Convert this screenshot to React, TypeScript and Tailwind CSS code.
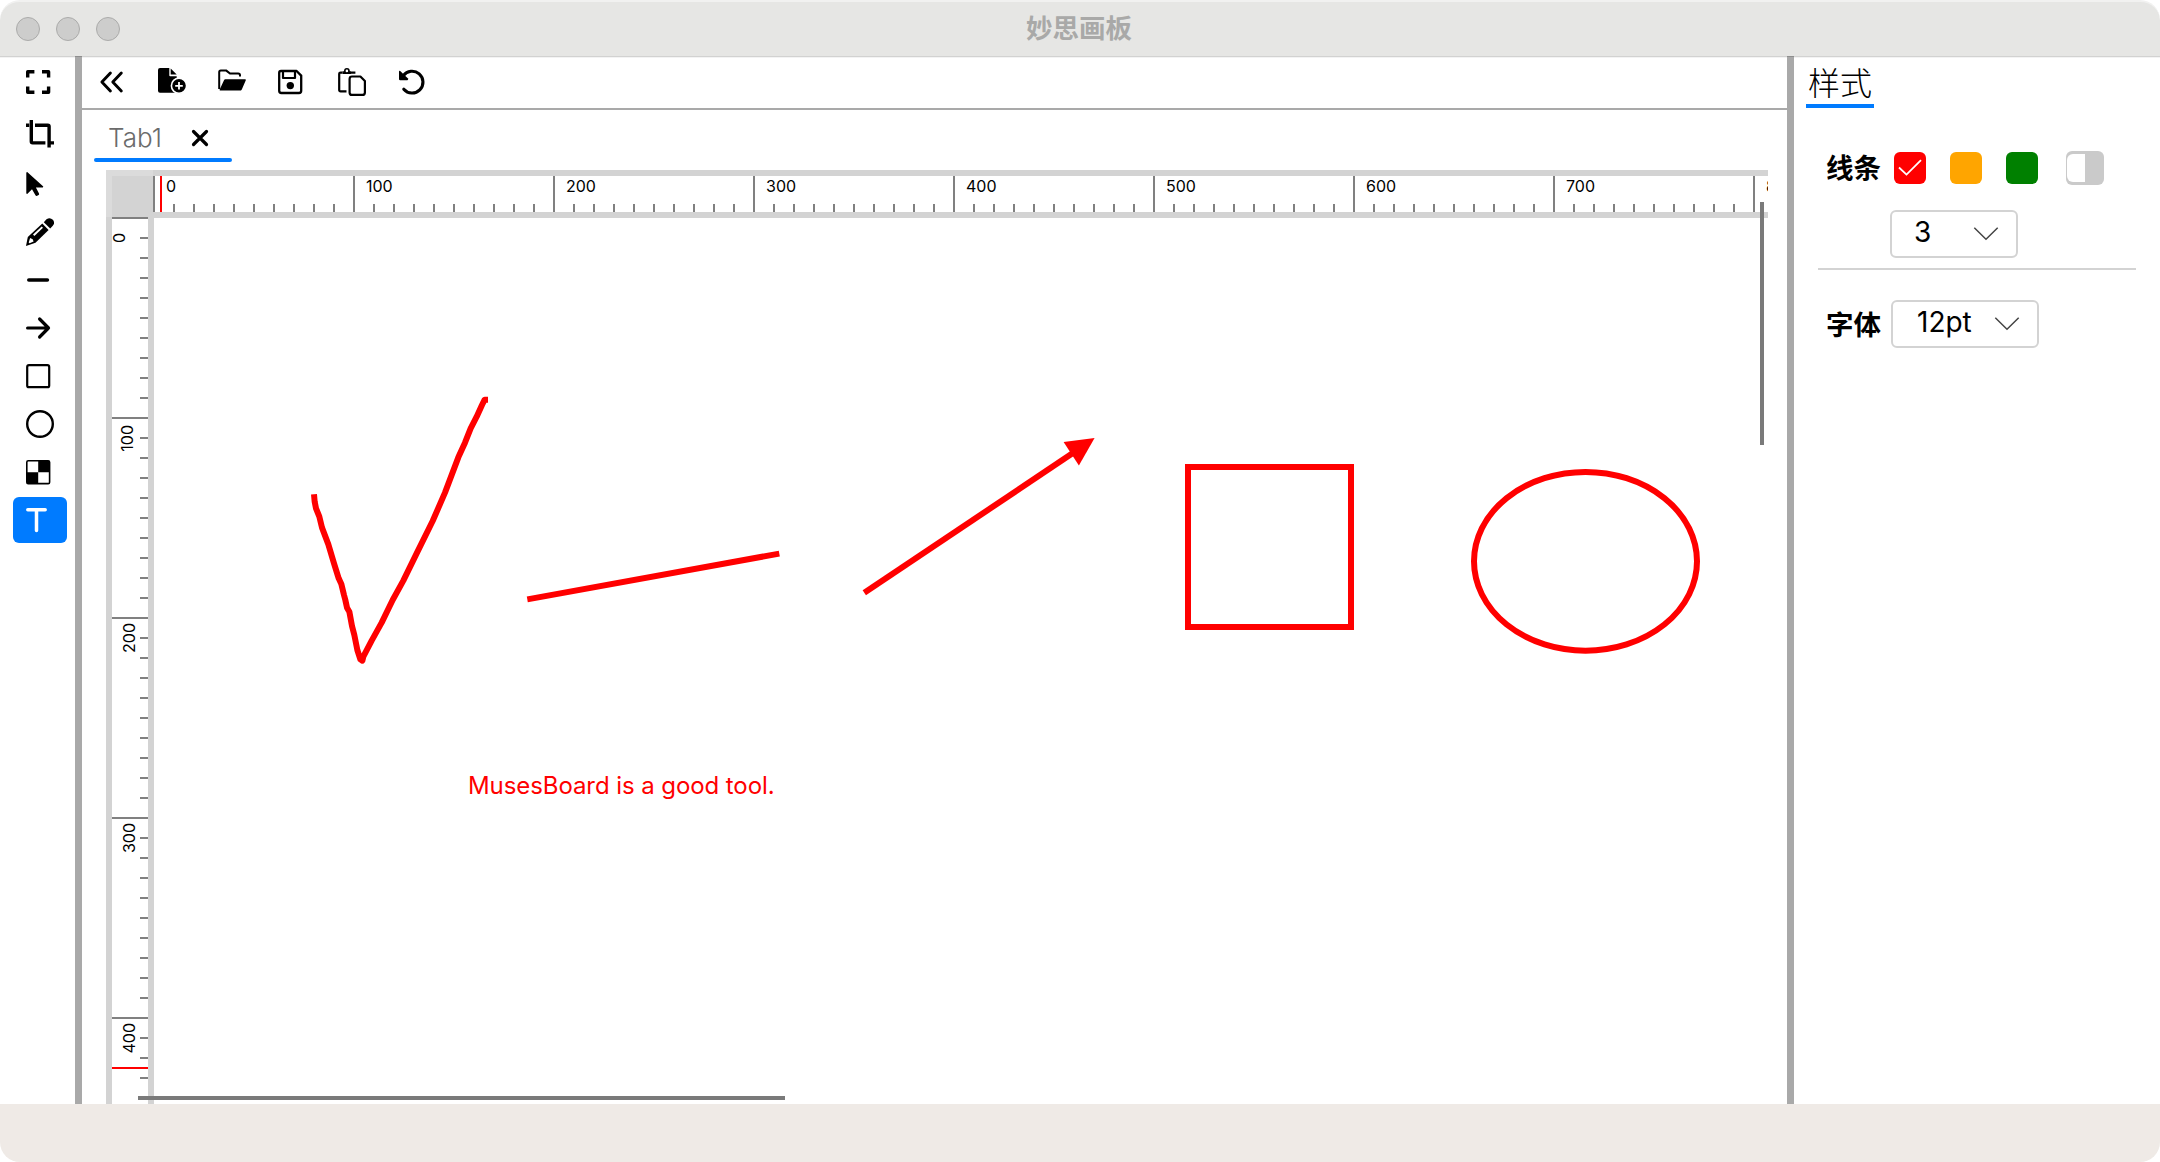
import React from "react";

const minorTicks = [1, 2, 3, 4, 5, 6, 7, 8, 9];

function Icon({ children }: { children: React.ReactNode }) {
  return (
    <svg width="28" height="28" viewBox="0 0 28 28" fill="none" stroke="currentColor" className="block shrink-0">
      {children}
    </svg>
  );
}

const tools: { name: string; icon: React.ReactNode; row: string }[] = [
  {
    name: "fullscreen",
    row: "h-12",
    icon: (
      <g strokeWidth="3.4" strokeLinejoin="round">
        <path d="M1.7 9.6V3.7H8.4M16 3.7H22.6V9.6M22.6 18.4V24.3H16M8.4 24.3H1.7V18.4" />
      </g>
    ),
  },
  {
    name: "crop",
    row: "h-[54px] pt-[2px]",
    icon: (
      <g strokeWidth="3.4" strokeLinejoin="round">
        <path d="M0 5.3H3.2M5.3 0V21.6Q5.3 22.9 6.6 22.9H19.4M9 5.3H21.8Q23.1 5.3 23.1 6.5V27.6M24.4 22.9H28" />
      </g>
    ),
  },
  {
    name: "pointer",
    row: "h-12",
    icon: <path d="M0.3 2.6V23.6L1.2 24L6 19.2L9.6 25.4Q10.2 26.2 11.2 25.7L12.6 25Q13.4 24.5 13 23.5L9.9 17.4H16.8L17.3 16.4L1.2 2Z" fill="currentColor" stroke="none" />,
  },
  {
    name: "pencil",
    row: "h-12",
    icon: (
      <g stroke="none">
        <path d="M16.3 5.6L22.6 11.9L9.5 24.8L0 28L1.8 18.9Z" fill="currentColor" />
        <path d="M17.8 4.2L20.5 1.3Q24 -1.2 26.8 1.8Q29.4 4.8 26.8 7.7L24.2 10.4Z" fill="currentColor" />
        <path d="M7 16.5L15.7 8.6L17 9.8L8.4 18.1Z" fill="white" />
        <path d="M4.1 20.1L6.7 21.2L7.6 23.4L3.6 25.2L2.7 24.4Z" fill="white" />
      </g>
    ),
  },
  { name: "line", row: "h-12", icon: <path d="M2.8 14H21.4" strokeWidth="3.6" strokeLinecap="round" /> },
  {
    name: "arrow",
    row: "h-12",
    icon: <path d="M1.6 14H22.5M13.6 5L22.5 14L13.6 23" strokeWidth="3.2" strokeLinecap="round" strokeLinejoin="round" />,
  },
  { name: "rectangle", row: "h-12", icon: <rect x="1.2" y="3.2" width="22" height="22" rx="1.8" strokeWidth="2.2" /> },
  { name: "circle", row: "h-12", icon: <circle cx="14" cy="14" r="12.8" strokeWidth="2.4" /> },
  {
    name: "mosaic",
    row: "h-12",
    icon: (
      <g>
        <rect x="0.8" y="2.8" width="22.8" height="22.8" rx="1.4" strokeWidth="1.6" />
        <path d="M12.2 3H23.4V14.2H12.2ZM1 14.2H12.2V25.4H1Z" fill="currentColor" stroke="none" />
      </g>
    ),
  },
  {
    name: "text",
    row: "h-12",
    icon: <path d="M1.8 3.8H19.2M10.5 3.8V24.6" strokeWidth="3.5" strokeLinecap="round" />,
  },
];

const actions: { name: string; icon: React.ReactNode }[] = [
  {
    name: "collapse",
    icon: <path d="M12.4 5L3.9 14L12.4 23M23.3 5L14.8 14L23.3 23" strokeWidth="2.9" strokeLinecap="round" strokeLinejoin="round" />,
  },
  {
    name: "new",
    icon: (
      <g stroke="none">
        <path d="M2 0H11.3V7.4Q11.3 8.2 12.1 8.2H18.7V24.8H2Q0 24.8 0 22.8V2Q0 0 2 0Z" fill="currentColor" />
        <path d="M12.7 0.6L18.7 6.6H12.7Z" fill="currentColor" />
        <circle cx="21" cy="17.8" r="7.6" fill="currentColor" stroke="white" strokeWidth="1.6" />
        <path d="M21 14V21.6M17.2 17.8H24.8" stroke="white" strokeWidth="1.8" />
      </g>
    ),
  },
  {
    name: "open",
    icon: (
      <g>
        <path d="M1.2 21V4.2Q1.2 2.6 2.8 2.6H8.3L12 5.6H20.2Q22 5.6 22 7.4V8.6" strokeWidth="2" />
        <path d="M7.4 11.2H27Q28.2 11.2 27.8 12.3L23.8 21.4Q23.2 22.6 21.8 22.6H2.6Q1.2 22.6 1.8 21.2L6 12.2Q6.4 11.2 7.4 11.2Z" fill="currentColor" stroke="none" />
      </g>
    ),
  },
  {
    name: "save",
    icon: (
      <g>
        <path d="M3 3H18.6L23.2 7.6V22.8Q23.2 25 21 25H3.4Q1.2 25 1.2 22.8V4.8Q1.2 3 3 3Z" strokeWidth="2.3" strokeLinejoin="round" />
        <path d="M5 3V10H17V3" strokeWidth="2.2" strokeLinejoin="round" />
        <circle cx="12.3" cy="17.6" r="3.7" fill="currentColor" stroke="none" />
      </g>
    ),
  },
  {
    name: "paste",
    icon: (
      <g>
        <path d="M8.5 23.4H2.6Q1.2 23.4 1.2 22V5.8Q1.2 4.6 2.6 4.6H4.6M13 4.6H17.4" strokeWidth="2.2" />
        <path d="M4.6 3.2H6.6A2.3 2.3 0 0 1 11.2 3.2H13V6H4.6Z" fill="currentColor" stroke="none" />
        <circle cx="8.9" cy="2.9" r="2.1" strokeWidth="1.6" fill="white" />
        <path d="M14 8.5H22.4L26.9 13V24.4Q26.9 26.9 24.4 26.9H14Q11.6 26.9 11.6 24.4V11Q11.6 8.5 14 8.5Z" strokeWidth="2.2" strokeLinejoin="round" />
      </g>
    ),
  },
  {
    name: "undo",
    icon: (
      <g>
        <path d="M5.3 7.6A10.9 10.9 0 1 1 5.8 21.2" strokeWidth="3.1" strokeLinecap="round" />
        <path d="M1 3.6Q1 2 2.2 3.1L10 10.6Q10.6 12 9.4 12.2H2.2Q1 12.2 1 11Z" fill="currentColor" stroke="none" />
      </g>
    ),
  },
];

function TitleBar() {
  return (
    <header className="flex h-[57px] shrink-0 items-center rounded-t-[20px] border-b border-t-2 border-b-[#d2d2d1] border-t-[#f1f1f0] bg-[#e6e6e4]">
      <div className="flex w-[200px] gap-4 pl-4">
        {["close", "minimize", "zoom"].map((n) => (
          <span key={n} className="size-6 rounded-full border border-[#ababaa] bg-[#cdcdcc]" />
        ))}
      </div>
      <h1 className="flex-1 pb-[3px] pr-[202px] text-center text-[26.5px] font-bold leading-[40px] text-[#a9a9a8]">妙思画板</h1>
    </header>
  );
}

function ToolBox() {
  return (
    <nav className="flex w-[75px] shrink-0 flex-col">
      {tools.map((t) => (
        <div key={t.name} className={`flex shrink-0 items-center pl-[13px] ${t.row}`}>
          <button
            aria-label={t.name}
            className={
              t.name === "text"
                ? "flex h-[46px] w-[54px] items-center rounded-md bg-[#007bff] pl-[13px] text-white"
                : "flex h-[46px] w-[54px] items-center pl-[13px] text-black"
            }
          >
            <Icon>{t.icon}</Icon>
          </button>
        </div>
      ))}
    </nav>
  );
}

function Divider() {
  return <div className="relative -mt-[2px] w-[7px] shrink-0 border-t border-[#8e8e8e] bg-[#a9a9a9]" />;
}

function HorizontalRuler() {
  return (
    <div className="relative flex h-12 w-[1615px] overflow-hidden border-b-[6px] border-t-[6px] border-[#d3d3d3]">
      {[0, 100, 200, 300, 400, 500, 600, 700, 800].map((n) => (
        <div key={n} className="relative flex h-9 w-[200px] shrink-0 items-end border-l-2 border-[#808080]">
          {minorTicks.map((i) => (
            <span key={i} className="h-2 w-5 border-r-2 border-[#808080]" />
          ))}
          <span className="absolute left-[11px] top-0 text-[16px] leading-[20px]">{n}</span>
        </div>
      ))}
      <span className="absolute left-[7px] top-0 h-9 w-[2px] bg-[#ff0000]" />
    </div>
  );
}

function VerticalRuler() {
  return (
    <div className="relative h-[887px] w-12 shrink-0 overflow-hidden border-l-[6px] border-r-[6px] border-[#d3d3d3]">
      {[0, 100, 200, 300, 400].map((n) => (
        <div key={n} className="relative flex h-[200px] flex-col items-end border-t-2 border-[#808080]">
          {minorTicks.map((i) => (
            <span key={i} className="h-5 w-2 shrink-0 border-b-2 border-[#808080]" />
          ))}
          <span
            className={
              n === 0
                ? "absolute left-[-3px] top-[14px] rotate-180 text-[16px] leading-[20px] [writing-mode:vertical-rl]"
                : n === 100
                  ? "absolute left-[5px] top-[6px] rotate-180 text-[16px] leading-[20px] [writing-mode:vertical-rl]"
                  : "absolute left-[7px] top-[4px] rotate-180 text-[16px] leading-[20px] [writing-mode:vertical-rl]"
            }
          >
            {n}
          </span>
        </div>
      ))}
      <span className="absolute left-0 top-[850px] h-[2px] w-9 bg-[#ff0000]" />
    </div>
  );
}

function Drawing() {
  return (
    <svg width="1614" height="886" viewBox="154 218 1614 886" className="block shrink-0" fill="none" stroke="#ff0000" strokeWidth="6">
      <polyline
        transform="translate(280 370) scale(0.33333)"
        strokeWidth="18"
        strokeLinejoin="round"
        points="102,373 104,395 108,415 118,440 126,473 145,523 162,580 176,625 184,642 192,675 196,690 201,713 208,725 216,768 223,795 232,840 241,868 247,872 250,860 275,812 305,758 338,690 370,632 410,550 458,453 495,368 535,262 555,218 572,175 590,140 606,105 614,89 624,89"
      />
      <path d="M527.3 599.4L779.3 553.6" />
      <path d="M864.3 592.8L1072.5 453.3" />
      <path d="M1094.6 438.1L1063.6 442L1078.9 465.4Z" fill="#ff0000" stroke="none" />
      <rect x="1188" y="467" width="163" height="160" />
      <ellipse cx="1585.5" cy="561.3" rx="111.5" ry="89.4" />
      <text x="468" y="794" fontSize="24" letterSpacing="-0.08" fill="#ff0000" stroke="none">
        MusesBoard is a good tool.
      </text>
    </svg>
  );
}

function Workspace() {
  return (
    <main className="flex w-[1705px] shrink-0 flex-col">
      <div className="flex h-[52px] shrink-0 items-center border-b-2 border-[#a9a9a9] pl-4">
        {actions.map((a) => (
          <button key={a.name} aria-label={a.name} className="mb-[2px] w-[60px]">
            <Icon>{a.icon}</Icon>
          </button>
        ))}
      </div>
      <div className="flex h-[60px] shrink-0 pl-3">
        <div className="flex h-[52px] w-[138px] items-center justify-between border-b-4 border-[#007bff] rounded-none border-none pl-[14px] pr-[23px]">
          <span className="pt-[3px] text-[26px] font-light leading-[32px] text-[#6b6b6b]">Tab1</span>
          <svg width="18" height="18" viewBox="0 0 18 18" stroke="black" strokeWidth="3.2" strokeLinecap="round" className="mt-[4px]">
            <path d="M2.5 2.5L15.5 15.5M15.5 2.5L2.5 15.5" />
          </svg>
        </div>
      </div>
      <div className="relative h-[934px] shrink-0 pl-6">
        <span className="absolute left-3 top-[-12px] h-1 w-[138px] rounded-sm bg-[#007bff]" />
        <div className="flex h-[47px]">
          <div className="w-[47px] shrink-0 border-l-[6px] border-t-[6px] border-[#dbdbdb] bg-[#d3d3d3]" />
          <HorizontalRuler />
        </div>
        <div className="flex">
          <VerticalRuler />
          <div className="mt-px">
            <Drawing />
          </div>
        </div>
        <span className="absolute left-[56px] top-[926px] h-1 w-[647px] bg-[#7a7a7a]" />
        <span className="absolute left-[1678px] top-8 h-[243px] w-1 bg-[#7a7a7a]" />
      </div>
    </main>
  );
}

function Chevron() {
  return (
    <svg width="26" height="16" viewBox="0 0 26 16" fill="none" stroke="#444" strokeWidth="1.5">
      <path d="M1.3 1.7L13 13.2L24.7 1.7" />
    </svg>
  );
}

function StylePanel() {
  return (
    <aside className="flex w-[366px] shrink-0 flex-col">
      <div className="ml-3 flex h-[50px] w-[68px] justify-center border-b-4 border-[#007bff]">
        <span className="pt-[2px] text-[32px] font-light leading-[48px]">样式</span>
      </div>
      <div className="mt-[42px] flex h-[36px] items-center pl-8">
        <span className="w-[68px] text-[27.5px] font-bold leading-[36px]">线条</span>
        <span className="flex size-8 items-center justify-center rounded-md bg-[#ff0000]">
          <svg width="24" height="18" viewBox="0 0 24 18" fill="none" stroke="white" strokeWidth="1.8">
            <path d="M1 8.5L8.5 15.6L23 1.2" />
          </svg>
        </span>
        <span className="ml-6 size-8 rounded-md bg-[#ffa500]" />
        <span className="ml-6 size-8 rounded-md bg-[#008000]" />
        <span className="ml-7 flex h-[34px] w-[38px] items-center rounded-md bg-[#cacaca] pl-px">
          <span className="h-7 w-[18px] rounded-l-md bg-white" />
        </span>
      </div>
      <div className="ml-24 mt-6 flex h-12 w-32 items-center justify-between rounded-md border-2 border-[#d3d3d3] pl-[22px] pr-[17px]">
        <span className="pb-1 text-[28px] leading-[34px]">3</span>
        <Chevron />
      </div>
      <div className="ml-6 mt-[10px] h-[2px] w-[318px] bg-[#d3d3d3]" />
      <div className="mt-[30px] flex items-center pl-8">
        <span className="w-[65px] pt-[2px] text-[27.5px] font-bold leading-[36px]">字体</span>
        <div className="flex h-12 w-[148px] items-center justify-between rounded-md border-2 border-[#d3d3d3] pl-6 pr-[17px]">
          <span className="pb-1 text-[28px] leading-[34px]">12pt</span>
          <Chevron />
        </div>
      </div>
    </aside>
  );
}

export default function App() {
  return (
    <div className="flex h-[1162px] w-[2160px] flex-col overflow-hidden bg-white font-['Inter','Noto_Sans_CJK_SC',sans-serif] text-black">
      <TitleBar />
      <div className="flex h-[1047px] shrink-0 border-t border-[#f3f3f3]">
        <ToolBox />
        <Divider />
        <Workspace />
        <Divider />
        <StylePanel />
      </div>
      <footer className="h-[58px] shrink-0 rounded-b-[20px] bg-[#efeae6]" />
    </div>
  );
}
